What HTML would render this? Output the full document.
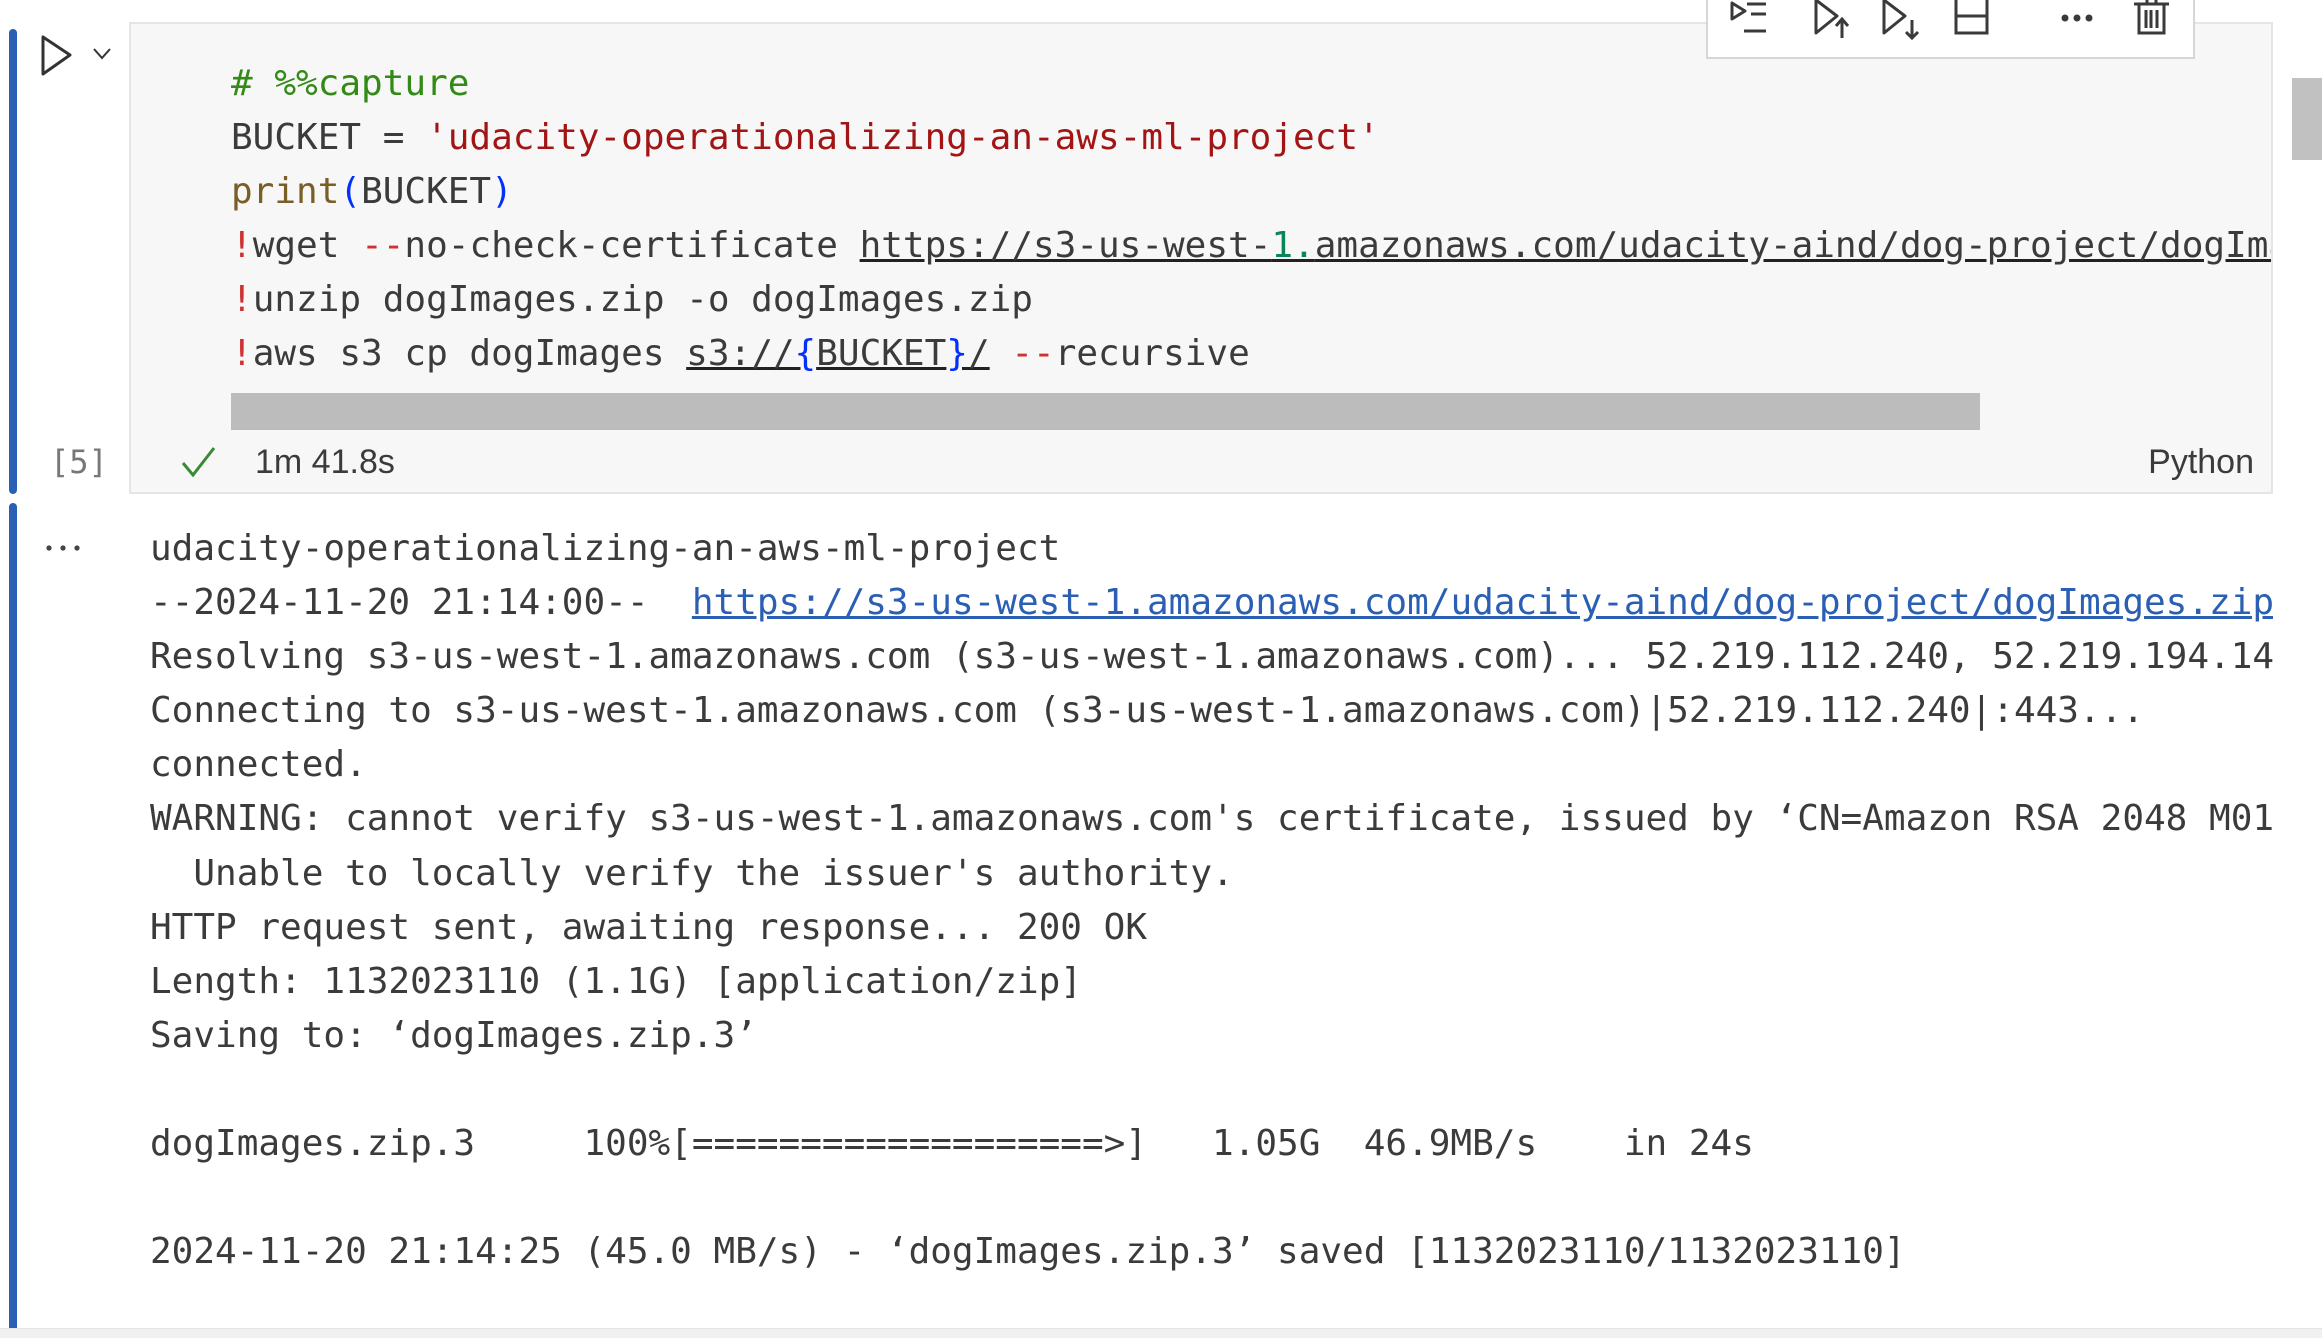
<!DOCTYPE html>
<html><head><meta charset="utf-8"><style>
html,body{margin:0;padding:0;background:#fff;width:2322px;height:1338px;overflow:hidden;position:relative}
.abs{position:absolute}
.mono{font-family:"DejaVu Sans Mono","Liberation Mono",monospace;font-size:36px;color:#3b3b3b}
.code div,.out div{height:54.1px;line-height:54.1px;white-space:pre;overflow:hidden}
.c{color:#338a17}.s{color:#a31515}.f{color:#795e26}.p{color:#0431fa}.r{color:#cd3131}.n{color:#098658}
.u{text-decoration:underline;text-decoration-color:#222}
a{color:#2a5fb4;text-decoration:underline}
.sans{font-family:"Liberation Sans","DejaVu Sans",sans-serif;color:#3b3b3b}
</style></head><body>
<div class="abs" style="left:9px;top:29px;width:8px;height:465px;background:#2a5fb4;border-radius:4px"></div>
<div class="abs" style="left:9px;top:503px;width:8px;height:830px;background:#2a5fb4;border-radius:4px"></div>
<svg class="abs" style="left:38px;top:34px" width="90" height="44" viewBox="0 0 90 44"><path d="M5 3 L5 40 L32 21 Z" fill="none" stroke="#333" stroke-width="3" stroke-linejoin="round"/><path d="M56 15 L64 24 L72 15" fill="none" stroke="#333" stroke-width="2"/></svg>
<div class="abs" style="left:129px;top:22px;width:2140px;height:468px;background:#f7f7f7;border:2px solid #e5e5e5"></div>
<div class="abs" style="left:1706px;top:-4px;width:485px;height:59px;background:#fff;border:2px solid #d6d6d6"></div>
<svg class="abs" style="left:1706px;top:0" width="489" height="40" viewBox="0 0 489 40" fill="none" stroke="#3a3a3a" stroke-width="3">
<path d="M26 3 L26 19 L39 11 Z" stroke-linejoin="round"/><path d="M41 4H60M45 14H60M38 31H60"/>
<path d="M110 0 L110 33 L131 16 Z" stroke-linejoin="round"/><path d="M136 38V20M130 26L136 19L142 26"/>
<path d="M178 0 L178 33 L199 16 Z" stroke-linejoin="round"/><path d="M206 20V38M200 32L206 38L212 32"/>
<path d="M250 0V33H281V0M250 16H281"/>
<circle cx="359" cy="18" r="2" fill="#3a3a3a"/><circle cx="371" cy="18" r="2" fill="#3a3a3a"/><circle cx="383" cy="18" r="2" fill="#3a3a3a"/>
<path d="M428 4H463M433 4V33H458V4M440 10V28M445 10V28M451 10V28M441 4V0M450 4V0"/>
</svg>
<div class="abs mono code" style="left:231px;top:57px;width:2040px">
<div><span class="c"># %%capture</span></div>
<div>BUCKET = <span class="s">'udacity-operationalizing-an-aws-ml-project'</span></div>
<div><span class="f">print</span><span class="p">(</span>BUCKET<span class="p">)</span></div>
<div><span class="r">!</span>wget <span class="r">--</span>no-check-certificate <span class="u">https://s3-us-west-<span class="n">1.</span>amazonaws.com/udacity-aind/dog-project/dogImages.zip</span></div>
<div><span class="r">!</span>unzip dogImages.zip -o dogImages.zip</div>
<div><span class="r">!</span>aws s3 cp dogImages <span class="u">s3://<span class="p">{</span>BUCKET<span class="p">}</span>/</span> <span class="r">--</span>recursive</div>
</div>
<div class="abs" style="left:231px;top:393px;width:1749px;height:37px;background:#bcbcbc"></div>
<div class="abs mono" style="left:50px;top:442px;font-size:32px;line-height:40px;color:#777">[5]</div>
<svg class="abs" style="left:180px;top:445px" width="38" height="34" viewBox="0 0 38 34"><path d="M3 18 L13 30 L34 3" fill="none" stroke="#388a34" stroke-width="3"/></svg>
<div class="abs sans" style="left:255px;top:442px;font-size:34px;line-height:40px">1m 41.8s</div>
<div class="abs sans" style="right:68px;top:442px;font-size:34px;line-height:40px">Python</div>
<div class="abs" style="left:2292px;top:78px;width:30px;height:82px;background:#c1c1c1"></div>
<svg class="abs" style="left:44px;top:540px" width="44" height="16"><circle cx="5" cy="8" r="2.6" fill="#444"/><circle cx="19" cy="8" r="2.6" fill="#444"/><circle cx="33" cy="8" r="2.6" fill="#444"/></svg>
<div class="abs mono out" style="left:150px;top:522px;width:2123px">
<div>udacity-operationalizing-an-aws-ml-project</div>
<div>--2024-11-20 21:14:00--  <a>https://s3-us-west-1.amazonaws.com/udacity-aind/dog-project/dogImages.zip</a></div>
<div>Resolving s3-us-west-1.amazonaws.com (s3-us-west-1.amazonaws.com)... 52.219.112.240, 52.219.194.144</div>
<div>Connecting to s3-us-west-1.amazonaws.com (s3-us-west-1.amazonaws.com)|52.219.112.240|:443...</div>
<div>connected.</div>
<div>WARNING: cannot verify s3-us-west-1.amazonaws.com's certificate, issued by ‘CN=Amazon RSA 2048 M01</div>
<div>  Unable to locally verify the issuer's authority.</div>
<div>HTTP request sent, awaiting response... 200 OK</div>
<div>Length: 1132023110 (1.1G) [application/zip]</div>
<div>Saving to: ‘dogImages.zip.3’</div>
<div> </div>
<div>dogImages.zip.3     100%[===================>]   1.05G  46.9MB/s    in 24s</div>
<div> </div>
<div>2024-11-20 21:14:25 (45.0 MB/s) - ‘dogImages.zip.3’ saved [1132023110/1132023110]</div>
</div>
<div class="abs" style="left:0;top:1328px;width:2322px;height:10px;background:#f0f0f0;border-top:1px solid #e4e4e4"></div>
</body></html>
